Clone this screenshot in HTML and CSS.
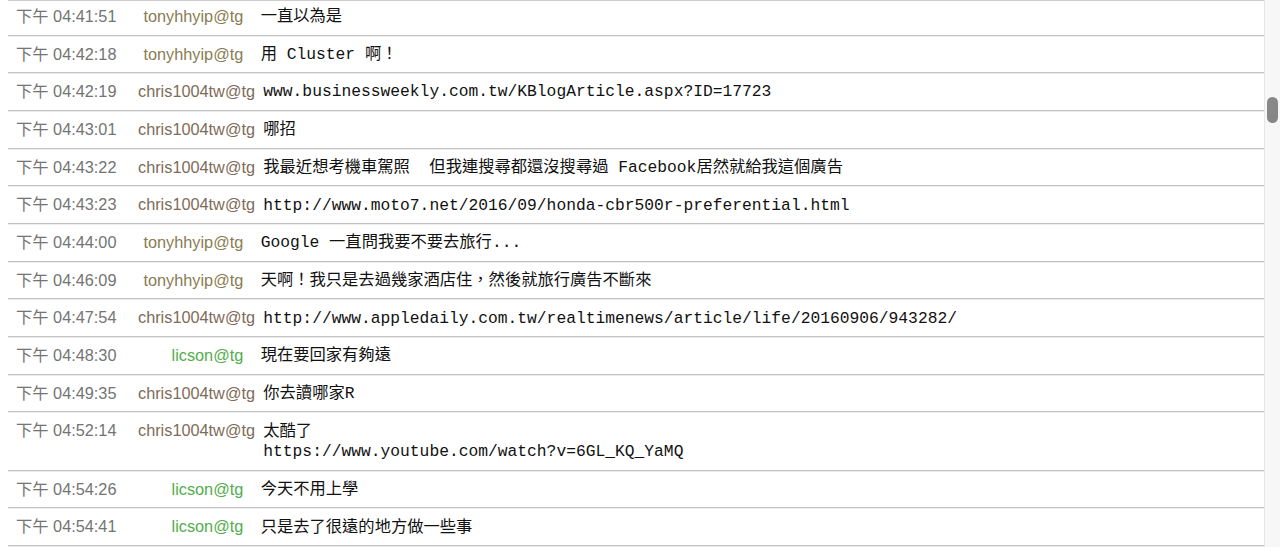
FILE: index.html
```html
<!DOCTYPE html>
<html lang="zh-Hant">
<head>
<meta charset="utf-8">
<title>Chat log</title>
<link rel="stylesheet" href="styles.css">
</head>
<body>
<div class="screen">
  <main class="viewport">
    <div class="log">
      <div class="row"><span class="time">下午 04:41:51</span><span class="nick nick-tony">tonyhhyip@tg</span><span class="msg">一直以為是</span></div>
      <div class="row"><span class="time">下午 04:42:18</span><span class="nick nick-tony">tonyhhyip@tg</span><span class="msg">用 Cluster 啊！</span></div>
      <div class="row row-wide"><span class="time">下午 04:42:19</span><span class="nick nick-chris">chris1004tw@tg</span><span class="msg">www.businessweekly.com.tw/KBlogArticle.aspx?ID=17723</span></div>
      <div class="row row-wide"><span class="time">下午 04:43:01</span><span class="nick nick-chris">chris1004tw@tg</span><span class="msg">哪招</span></div>
      <div class="row row-wide"><span class="time">下午 04:43:22</span><span class="nick nick-chris">chris1004tw@tg</span><span class="msg">我最近想考機車駕照  但我連搜尋都還沒搜尋過 Facebook居然就給我這個廣告</span></div>
      <div class="row row-wide"><span class="time">下午 04:43:23</span><span class="nick nick-chris">chris1004tw@tg</span><span class="msg">http://www.moto7.net/2016/09/honda-cbr500r-preferential.html</span></div>
      <div class="row"><span class="time">下午 04:44:00</span><span class="nick nick-tony">tonyhhyip@tg</span><span class="msg">Google 一直問我要不要去旅行...</span></div>
      <div class="row"><span class="time">下午 04:46:09</span><span class="nick nick-tony">tonyhhyip@tg</span><span class="msg">天啊！我只是去過幾家酒店住，然後就旅行廣告不斷來</span></div>
      <div class="row row-wide"><span class="time">下午 04:47:54</span><span class="nick nick-chris">chris1004tw@tg</span><span class="msg">http://www.appledaily.com.tw/realtimenews/article/life/20160906/943282/</span></div>
      <div class="row"><span class="time">下午 04:48:30</span><span class="nick nick-licson">licson@tg</span><span class="msg">現在要回家有夠遠</span></div>
      <div class="row row-wide"><span class="time">下午 04:49:35</span><span class="nick nick-chris">chris1004tw@tg</span><span class="msg">你去讀哪家R</span></div>
      <div class="row row-wide"><span class="time">下午 04:52:14</span><span class="nick nick-chris">chris1004tw@tg</span><span class="msg">太酷了
https://www.youtube.com/watch?v=6GL_KQ_YaMQ</span></div>
      <div class="row"><span class="time">下午 04:54:26</span><span class="nick nick-licson">licson@tg</span><span class="msg">今天不用上學</span></div>
      <div class="row"><span class="time">下午 04:54:41</span><span class="nick nick-licson">licson@tg</span><span class="msg">只是去了很遠的地方做一些事</span></div>
    </div>
  </main>
  <div class="scrollbar"><div class="thumb"></div></div>
</div>
</body>
</html>
```

FILE: styles.css
```css
html, body {
  margin: 0;
  padding: 0;
  height: 100%;
  background: #ffffff;
}

.screen {
  display: flex;
  height: 547px;
  overflow: hidden;
}

.viewport {
  flex: 1;
  margin-left: 8px;
  border-top: 1px solid #cdcdcd;
  overflow: hidden;
}

.log {
  margin-top: -3.2px;
}

.row {
  --time-w: 121.7px;
  --nick-w: 105.6px;
  --msg-pad: 17.4px;
  display: grid;
  grid-template-columns: var(--time-w) var(--nick-w) 1fr;
  padding: 8.1px 0 8.1px 8px;
  line-height: 20.5px;
  border-bottom: 1px solid #c2c2c2;
  box-shadow: 0 1px 0 #ececec;
}

.row-wide {
  --nick-w: 117.3px;
  --msg-pad: 8.3px;
}

.time {
  font-family: "Liberation Sans", "Noto Sans CJK TC", sans-serif;
  font-size: 16.3px;
  color: #747474;
  white-space: nowrap;
}

.nick {
  font-family: "Liberation Sans", "Noto Sans CJK TC", sans-serif;
  font-size: 16.3px;
  text-align: right;
  white-space: nowrap;
}

.nick-tony { color: #8a7c52; }
.nick-chris { color: #7e6b58; }
.nick-licson { color: #52ad4c; }

.msg {
  padding-left: var(--msg-pad);
  padding-top: 1.2px;
  margin-bottom: -1.2px;
  font-family: "Liberation Mono", "Noto Sans CJK TC", monospace;
  font-size: 16.3px;
  color: #111111;
  white-space: pre-wrap;
}

.scrollbar {
  flex: 0 0 15px;
  background: #f7f7f7;
  border-left: 1px solid #e6e6e6;
}

.thumb {
  margin: 97px 0 0 2px;
  width: 11px;
  height: 26px;
  border-radius: 6px;
  background: #878787;
}
```
